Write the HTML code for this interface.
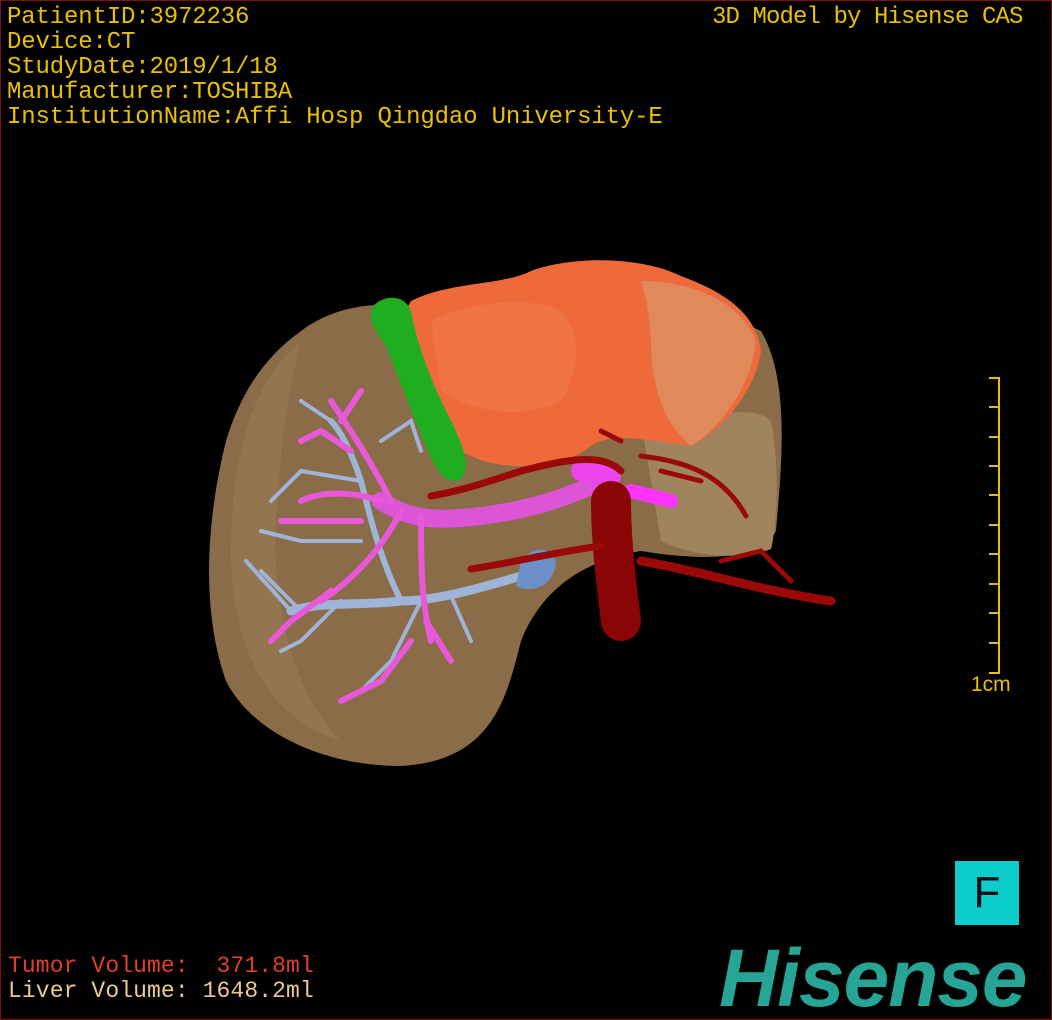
<!DOCTYPE html>
<html><head><meta charset="utf-8"><style>
html,body{margin:0;padding:0;background:#000;}
#w{position:relative;width:1050px;height:1018px;border:1px solid #7a1414;overflow:hidden;background:#000;}
.t{position:absolute;font-family:"Liberation Mono",monospace;font-size:24px;line-height:25px;color:#e8c000;white-space:pre;}
svg{position:absolute;left:0;top:0;}
</style></head><body><div id="w">
<svg width="1052" height="1020" viewBox="0 0 1052 1020">
<path d="M300,330 C340,300 390,300 420,310 L520,300 C600,290 700,300 760,330 C790,380 780,470 775,530 C760,560 700,560 640,550 C580,560 540,590 520,640 C505,700 490,760 400,765 C320,765 250,730 225,680 C200,610 205,520 225,440 C240,390 265,355 300,330 Z" fill="#8a6c48"/>
<path d="M300,340 C250,380 230,460 230,550 C230,650 270,720 340,740 C300,700 270,620 275,520 C280,430 290,380 300,340Z" fill="#9c7c56" opacity="0.6"/>
<path d="M640,420 C700,420 750,400 770,420 C780,470 775,530 770,548 C740,560 690,555 660,540 Z" fill="#a0845e"/>
<path d="M410,300 C450,280 500,285 530,270 C570,255 640,255 680,275 C720,290 755,310 760,350 C755,390 720,430 690,445 C650,440 610,430 590,445 C560,470 500,470 470,455 C430,440 405,400 405,360 C405,330 400,315 410,300 Z" fill="#ee6a3a"/>
<path d="M640,280 C690,280 740,300 755,340 C750,390 715,430 690,445 C660,420 650,380 650,340 C648,310 645,295 640,280Z" fill="#e08a5c"/>
<path d="M430,320 C470,300 530,295 560,310 C580,330 580,370 560,400 C520,420 470,410 440,390 Z" fill="#f27a48" opacity="0.7"/>
<path d="M372,305 C385,292 405,295 410,310 C415,340 430,380 445,410 C460,440 472,465 460,478 C445,485 435,470 425,445 C410,410 395,370 385,345 C375,330 365,318 372,305Z" fill="#1fae1f"/>
<g stroke="#9fb4d8" fill="none" stroke-linecap="round">
<path d="M520,575 C470,590 430,600 400,600 C360,605 320,600 290,610" stroke-width="9"/>
<path d="M400,600 C380,560 370,520 360,480 C350,450 340,430 330,420" stroke-width="6"/>
<path d="M360,480 L300,470 L270,500 M340,600 L300,640 L280,650 M300,610 L260,570 M380,440 L410,420 L420,450 M330,420 L300,400 M290,610 L245,560 M420,600 L390,660 L360,690 M360,540 L300,540 L260,530 M450,595 L470,640" stroke-width="4"/>
<path d="M520,560 C530,545 550,545 555,560 C555,580 535,595 515,585 Z" fill="#6d8fc8" stroke="none"/>
</g>
<g stroke="#e858d8" fill="none" stroke-linecap="round">
<path d="M600,480 C560,500 520,510 480,515 C440,520 410,520 380,500" stroke-width="18" stroke="#dc55d6"/>
<path d="M580,470 L610,475" stroke-width="20" stroke="#ee44ee"/>
<path d="M630,490 L670,500" stroke-width="14" stroke="#ff33ff"/>
<path d="M380,500 C350,490 320,490 300,500 M400,510 C380,550 350,580 320,600 M420,515 C420,560 420,600 430,640 M390,500 C370,460 350,430 330,400 M350,450 L320,430 L300,440 M330,590 L290,620 L270,640 M425,620 L450,660 M410,640 L380,680 L340,700 M360,520 L280,520 M340,420 L360,390" stroke-width="6"/>
</g>
<g stroke="#9a0808" fill="none" stroke-linecap="round">
<path d="M610,500 C610,540 615,580 620,620" stroke-width="40" stroke="#8a0606"/>
<path d="M640,560 C700,570 760,590 830,600" stroke-width="9"/>
<path d="M600,545 C560,550 520,560 470,568" stroke-width="7"/>
<path d="M620,470 C600,450 560,460 520,470 C490,480 460,490 430,495" stroke-width="7"/>
<path d="M640,455 C680,460 720,470 745,515 M720,560 L760,550 L790,580 M620,440 L600,430 M660,470 L700,480" stroke-width="5"/>
</g>
</svg>
<div class="t" style="left:6px;top:4px;letter-spacing:-0.15px;">PatientID:3972236
Device:CT
StudyDate:2019/1/18
Manufacturer:TOSHIBA
InstitutionName:Affi Hosp Qingdao University-E</div>
<div class="t" style="left:711px;top:4px;letter-spacing:-0.9px;">3D Model by Hisense CAS</div>
<div class="t" style="left:7px;top:953px;font-size:23px;letter-spacing:0.1px;color:#e0402a;">Tumor Volume:  371.8ml</div>
<div class="t" style="left:7px;top:978px;font-size:23px;letter-spacing:0.1px;color:#ecca90;">Liver Volume: 1648.2ml</div>
<div style="position:absolute;left:997px;top:376px;width:2px;height:297px;background:#e8c000;"></div>
<div style="position:absolute;left:988px;top:376px;width:10px;height:2px;background:#e8c000;"></div>
<div style="position:absolute;left:988px;top:671px;width:10px;height:2px;background:#e8c000;"></div>
<div style="position:absolute;left:988px;top:405px;width:10px;height:2px;background:#d8b840;box-shadow:0 30px #d8b840,0 59px #d8b840,0 88px #d8b840,0 118px #d8b840,0 147px #d8b840,0 177px #d8b840,0 206px #d8b840,0 236px #d8b840;"></div>
<div style="position:absolute;left:970px;top:672px;font-family:'Liberation Sans',sans-serif;font-size:21px;color:#e8c000;">1cm</div>
<div style="position:absolute;left:954px;top:860px;width:64px;height:64px;background:#0ccccc;color:#111;font-family:'Liberation Sans',sans-serif;font-size:44px;line-height:64px;text-align:center;">F</div>
<div style="position:absolute;left:718px;top:928px;font-family:'Liberation Sans',sans-serif;font-weight:bold;font-style:italic;font-size:82px;line-height:100px;color:#26a596;letter-spacing:-1px;">Hisense</div>
</div></body></html>
